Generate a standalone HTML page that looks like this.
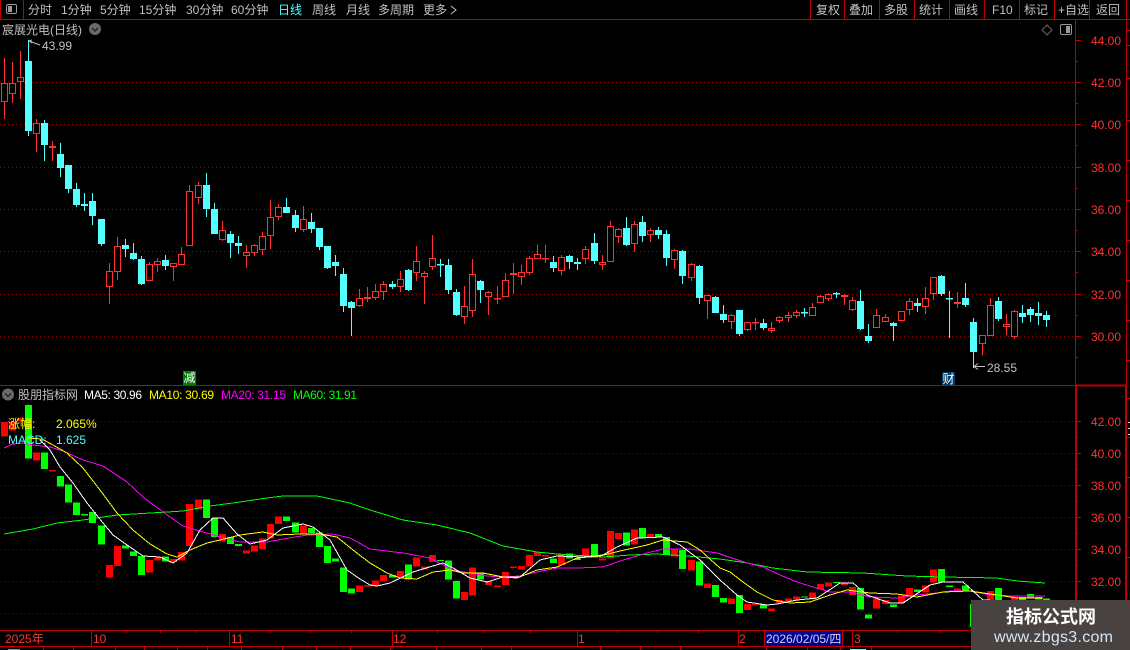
<!DOCTYPE html>
<html><head><meta charset="utf-8"><title>chart</title>
<style>
html,body{margin:0;padding:0;background:#000;width:1130px;height:650px;overflow:hidden}
svg{position:absolute;left:0;top:0;display:block}
text{font-family:"Liberation Sans","WenQuanYi Zen Hei","Noto Sans CJK SC",sans-serif;font-size:12px}
</style></head><body>
<svg width="1130" height="650" viewBox="0 0 1130 650" xmlns="http://www.w3.org/2000/svg">
<defs>
<path id="rb" d="M1.5 83.5h6v18h-6zM9.5 83.5h6v10h-6zM17.5 77.5h6v4h-6zM33.5 123.5h6v10h-6zM49.5 146.5h6v1h-6zM106.5 271.5h6v15h-6zM114.5 246.5h6v25h-6zM146.5 264.5h6v16h-6zM154.5 261.5h6v3h-6zM170.5 263.5h6v3h-6zM178.5 254.5h6v10h-6zM186.5 191.5h6v54h-6zM195.5 185.5h6v12h-6zM219.5 230.5h6v9h-6zM243.5 252.5h6v3h-6zM251.5 245.5h6v7h-6zM259.5 236.5h6v13h-6zM267.5 217.5h6v18h-6zM275.5 207.5h6v9h-6zM300.5 219.5h6v10h-6zM356.5 298.5h6v7h-6zM364.5 297.5h6v1h-6zM372.5 291.5h6v6h-6zM380.5 284.5h6v7h-6zM397.5 279.5h6v7h-6zM413.5 261.5h6v11h-6zM421.5 273.5h6v3h-6zM429.5 258.5h6v8h-6zM461.5 306.5h6v10h-6zM469.5 274.5h6v36h-6zM485.5 292.5h6v4h-6zM494.5 298.5h6v.5h-6zM502.5 280.5h6v16h-6zM510.5 273.5h6v1h-6zM518.5 272.5h6v4h-6zM526.5 258.5h6v14h-6zM534.5 254.5h6v4h-6zM542.5 258.5h6v.5h-6zM558.5 257.5h6v13h-6zM582.5 249.5h6v9h-6zM599.5 262.5h6v2h-6zM607.5 226.5h6v35h-6zM615.5 229.5h6v7h-6zM631.5 224.5h6v19h-6zM647.5 230.5h6v4h-6zM671.5 250.5h6v9h-6zM688.5 264.5h6v13h-6zM704.5 295.5h6v5h-6zM728.5 315.5h6v6h-6zM744.5 322.5h6v7h-6zM752.5 322.5h6v.5h-6zM768.5 328.5h6v2h-6zM776.5 317.5h6v3h-6zM785.5 315.5h6v2h-6zM793.5 312.5h6v3h-6zM809.5 307.5h6v8h-6zM817.5 296.5h6v6h-6zM825.5 294.5h6v4h-6zM841.5 295.5h6v1h-6zM849.5 300.5h6v9h-6zM873.5 315.5h6v12h-6zM882.5 317.5h6v4h-6zM898.5 311.5h6v9h-6zM906.5 301.5h6v8h-6zM922.5 298.5h6v8h-6zM930.5 277.5h6v16h-6zM954.5 302.5h6v1h-6zM979.5 335.5h6v8h-6zM987.5 305.5h6v30h-6zM1003.5 324.5h6v2h-6zM1011.5 311.5h6v25h-6z"/>
<path id="cb" d="M25 61h7v70h-7zM41 123h7v22h-7zM57 154h7v14h-7zM65 165h7v24h-7zM73 189h7v16h-7zM81 204h7v2h-7zM89 201h7v15h-7zM98 219h7v25h-7zM122 245h7v4h-7zM130 253h7v6h-7zM138 259h7v25h-7zM162 260h7v6h-7zM203 185h7v24h-7zM211 209h7v25h-7zM227 234h7v9h-7zM235 243h7v3h-7zM283 207h7v6h-7zM292 215h7v13h-7zM308 222h7v7h-7zM316 228h7v19h-7zM324 246h7v22h-7zM332 262h7v4h-7zM340 274h7v32h-7zM348 302h7v6h-7zM389 284h7v3h-7zM405 270h7v20h-7zM437 264h7v1.5h-7zM445 265h7v25h-7zM453 292h7v23h-7zM477 281h7v9h-7zM550 262h7v6h-7zM566 256h7v6h-7zM574 262h7v2h-7zM591 243h7v18h-7zM623 228h7v17h-7zM639 222h7v14h-7zM655 230h7v5h-7zM663 234h7v24h-7zM679 251h7v25h-7zM696 266h7v32h-7zM712 297h7v16h-7zM720 314h7v6h-7zM736 310h7v24h-7zM760 323h7v5h-7zM801 312h7v1.5h-7zM833 293h7v1.5h-7zM857 301h7v28h-7zM865 336h7v5h-7zM890 323h7v3h-7zM914 303h7v3h-7zM938 276h7v18h-7zM946 298h7v1.5h-7zM962 298h7v7h-7zM970 322h7v30h-7zM995 301h7v18h-7zM1019 313h7v4h-7zM1027 309h7v6h-7zM1035 313h7v3h-7zM1043 315h7v5h-7z"/>
</defs>

<!-- upper grid -->
<g stroke="#a00000" stroke-width="1" stroke-dasharray="1 3" shape-rendering="crispEdges">
<path d="M0 82.5H1075M0 124.5H1075M0 167.5H1075M0 209.5H1075M0 251.5H1075M0 294.5H1075M0 336.5H1075"/>
</g>
<!-- lower grid -->
<g stroke="#7c0000" stroke-width="1" stroke-dasharray="1 3" shape-rendering="crispEdges">
<path d="M0 421.5H1075M0 453.5H1075M0 485.5H1075M0 517.5H1075M0 549.5H1075M0 581.5H1075M0 613.5H1075"/>
</g>

<!-- upper candles -->
<g shape-rendering="crispEdges" fill="none" stroke-width="1">
<path stroke="#ff3232" d="M4.5 58V119M12.5 62V103M20.5 51V99M36.5 119V152M52.5 141V161M109.5 263V304M117.5 237V280M149.5 262V281M157.5 258V272M173.5 263V281M181.5 247V265M189.5 185V246M198.5 182V204M222.5 221V241M246.5 245V268M254.5 244V256M262.5 232V255M270.5 200V249M278.5 204V220M303.5 206V232M359.5 289V307M367.5 287V302M375.5 284V300M383.5 281V300M400.5 271V292M416.5 246V281M424.5 271V304M432.5 235V270M464.5 286V324M472.5 259V317M488.5 291V315M497.5 286V304M505.5 273V297M513.5 263V294M521.5 265V285M529.5 256V275M537.5 245V259M545.5 245V263M561.5 255V275M585.5 246V264M602.5 255V270M610.5 221V262M618.5 228V243M634.5 221V252M650.5 228V242M674.5 249V269M691.5 263V281M707.5 295V319M731.5 314V329M747.5 322V331M755.5 318V330M771.5 322V333M779.5 316V323M788.5 312V322M796.5 310V318M812.5 303V316M820.5 295V303M828.5 293V301M844.5 294V305M852.5 297V311M876.5 309V328M885.5 314V322M901.5 311V321M909.5 298V315M925.5 287V314M933.5 277V300M957.5 292V308M982.5 335V355M990.5 298V336M1006.5 314V335M1014.5 310V339"/>
<path stroke="#54ffff" d="M28.5 40V136M44.5 120V161M60.5 143V177M68.5 165V193M76.5 183V207M84.5 193V211M92.5 193V225M101.5 219V246M125.5 239V257M133.5 243V260M141.5 256V285M165.5 255V270M206.5 173V217M214.5 203V234M230.5 231V258M238.5 236V254M286.5 198V213M295.5 210V232M311.5 213V233M319.5 228V250M327.5 246V269M335.5 255V276M343.5 268V312M351.5 301V336M392.5 281V289M408.5 269V291M440.5 259V277M448.5 259V294M456.5 289V316M480.5 280V303M553.5 256V272M569.5 255V269M577.5 258V270M594.5 233V264M626.5 217V246M642.5 216V242M658.5 227V239M666.5 230V266M682.5 250V284M699.5 265V304M715.5 296V313M723.5 305V323M739.5 310V336M763.5 319V330M804.5 308V317M836.5 292V298M860.5 290V330M868.5 324V343M893.5 322V341M917.5 298V312M941.5 275V296M949.5 291V338M965.5 283V307M973.5 318V368M998.5 297V321M1022.5 305V323M1030.5 307V322M1038.5 302V325M1046.5 311V327"/>
<use href="#rb" fill="#000" stroke="#ff3232" stroke-width="1"/>
<use href="#cb" fill="#54ffff"/>
</g>

<!-- lower bars -->
<g shape-rendering="crispEdges" transform="translate(0 358.65) scale(1 .7619)">
<use href="#rb" fill="#ff0000" stroke="#ff0000" stroke-width="1"/>
<use href="#cb" fill="#00ff00"/>
</g>

<!-- MA lines -->
<g fill="none" stroke-width="1" shape-rendering="crispEdges">
<polyline stroke="#00ff00" points="4,534 33,529 57,523 83,520 117,515 167,512 183,511 210,506 240,502 267,498 283,496 317,496 350,503 370,510 403,520 437,525 470,533 503,546 537,552 557,554 603,557 630,555 657,554 687,556 720,559 747,563 773,568 807,572 863,573 907,576 943,577 997,578 1017,581 1045,583"/>
<polyline stroke="#ff00ff" points="4,448 13,444 23,443 33,445 50,447 63,451 83,460 103,466 127,482 143,497 163,512 183,526 200,531 217,536 240,542 267,542 283,539 307,535 333,534 350,538 363,545 370,549 403,553 430,558 453,570 470,573 487,576 503,577 520,576 537,572 557,568 577,568 603,567 620,561 647,553 663,549 690,549 717,553 747,563 763,567 780,575 797,582 813,587 830,592 850,592 870,597 897,598 917,595 937,593 950,591 970,591 990,595 1013,596 1045,596"/>
<polyline stroke="#ffff00" points="28,438 42,439 53,445 67,453 83,468 100,490 117,513 133,530 150,544 167,554 177,557 190,550 207,543 220,540 240,535 263,532 277,535 300,534 320,534 337,537 353,550 370,563 387,573 400,578 417,579 433,572 450,570 463,573 483,573 503,577 517,578 537,570 557,567 577,558 600,556 620,551 647,545 663,540 687,542 700,550 720,568 730,572 743,582 757,592 773,600 790,603 810,602 830,595 847,590 870,593 897,594 917,597 943,592 970,591 997,595 1017,598 1043,598"/>
<polyline stroke="#ffffff" points="40,440 50,450 60,467 73,483 87,503 103,523 113,535 127,545 143,556 160,557 173,563 187,553 200,530 213,518 223,518 237,534 250,544 267,540 283,528 303,524 313,527 330,540 347,570 360,579 370,585 377,586 390,583 413,572 443,563 453,568 470,578 487,582 503,577 520,577 540,560 557,556 583,557 603,555 617,547 637,538 663,537 680,545 700,560 720,580 737,595 747,602 767,605 777,604 797,600 817,598 840,583 853,583 867,595 890,603 903,603 930,585 943,582 963,582 983,600 1010,601 1045,602"/>
</g>

<!-- frame lines -->
<g stroke="#c00000" fill="none" stroke-width="1" shape-rendering="crispEdges">
<path d="M0 19.5H1130M0.5 0V19M23.5 0V19M810.5 0V19M844.5 0V19M879.5 0V19M914.5 0V19M949.5 0V19M984.5 0V19M1019.5 0V19M1054.5 0V19M1089.5 0V19M1126.5 0V385"/>
<path d="M1075.5 19V385M0 385.5H1075"/>
<path stroke-width="2" d="M1075 385.5H1126M1076 385V600M1126 385V600"/>
<path d="M0 630.5H1075M0 646.5H1075M91.5 630V646M229.5 630V646M392.5 630V646M577.5 630V646M738.5 630V646M764.5 630V646M842.5 630V646M852.5 630V646"/>
<path d="M126.5 631V633M160.5 631V633M195.5 631V633M270.5 631V633M310.5 631V633M351.5 631V633M437.5 631V633M484.5 631V633M530.5 631V633M617.5 631V633M657.5 631V633M698.5 631V633M897.5 631V633M940.5 631V633"/>
<path d="M43.5 647V650M73.5 647V650M115.5 647V650M144.5 647V650M177.5 647V650M207.5 647V650M241.5 647V650M282.5 647V650M316.5 647V650M350.5 647V650M390.5 647V650M436.5 647V650M481.5 647V650M511.5 647V650M600.5 647V650M640.5 647V650M680.5 647V650M766.5 647V650M807.5 647V650M840.5 647V650M871.5 647V650"/>
<!-- upper axis ticks -->
<path d="M1076 40.5H1081M1076 82.5H1081M1076 124.5H1081M1076 167.5H1081M1076 209.5H1081M1076 251.5H1081M1076 294.5H1081M1076 336.5H1081M1076 61.5H1078M1076 103.5H1078M1076 145.5H1078M1076 188.5H1078M1076 230.5H1078M1076 272.5H1078M1076 315.5H1078M1076 357.5H1078"/>
<!-- lower axis ticks -->
<path d="M1077 421.5H1081M1077 453.5H1081M1077 485.5H1081M1077 517.5H1081M1077 549.5H1081M1077 581.5H1081M1077 437.5H1078M1077 469.5H1078M1077 501.5H1078M1077 533.5H1078M1077 565.5H1078"/>
<!-- right edge ticks -->
<path d="M1127 30.5H1130M1127 45.5H1130M1127 78.5H1130M1127 120.5H1130M1127 160.5H1130M1127 200.5H1130M1127 240.5H1130M1127 280.5H1130M1127 320.5H1130M1127 360.5H1130M1127 398.5H1130M1127 437.5H1130M1127 477.5H1130M1127 517.5H1130M1127 557.5H1130"/>
</g>
<path stroke="#ddd" stroke-width="1" shape-rendering="crispEdges" d="M1128 422.5H1130M1128 428.5H1130M1128 434.5H1130"/>

<!-- date box -->
<rect x="765" y="631" width="77" height="15" fill="#000090"/>
<rect x="850" y="649" width="16" height="1" fill="#54ffff"/>
<rect x="8" y="649" width="12" height="1" fill="#888"/>

<!-- top toolbar -->
<g fill="#c0c0c0">
<text x="28" y="14">分时</text>
<text x="61" y="14">1分钟</text>
<text x="100" y="14">5分钟</text>
<text x="139" y="14">15分钟</text>
<text x="186" y="14">30分钟</text>
<text x="231" y="14">60分钟</text>
<text x="278" y="14" fill="#54ffff">日线</text>
<text x="312" y="14">周线</text>
<text x="346" y="14">月线</text>
<text x="378" y="14">多周期</text>
<text x="423" y="14">更多</text>
<path d="M451 6l5 4-5 4" fill="none" stroke="#c0c0c0"/>
<text x="816" y="14">复权</text>
<text x="849" y="14">叠加</text>
<text x="884" y="14">多股</text>
<text x="919" y="14">统计</text>
<text x="954" y="14">画线</text>
<text x="992" y="14">F10</text>
<text x="1024" y="14">标记</text>
<text x="1058" y="14">+自选</text>
<text x="1096" y="14">返回</text>
<text x="2" y="34" font-size="13">宸展光电(日线)</text>
<text x="18" y="399">股朋指标网</text>
<text x="42" y="50">43.99</text>
<text x="987" y="372">28.55</text>
</g>

<!-- left toolbar icon -->
<rect x="6.5" y="4.5" width="10" height="9" rx="1.5" fill="#000" stroke="#999"/>
<rect x="8" y="6" width="4" height="6" fill="#999"/>
<!-- right icons -->
<path d="M1047 25l5 5-5 5-5-5z" fill="none" stroke="#666"/>
<rect x="1060.5" y="24.5" width="11" height="10" rx="1.5" fill="#000" stroke="#999"/>
<rect x="1066" y="26" width="4" height="7" fill="#999"/>

<!-- circle chevrons -->
<circle cx="95" cy="29" r="6" fill="#6a6a6a"/>
<path d="M92 28l3 3 3-3" fill="none" stroke="#222" stroke-width="1.4"/>
<circle cx="8" cy="394.5" r="6" fill="#6a6a6a"/>
<path d="M5 393.5l3 3 3-3" fill="none" stroke="#222" stroke-width="1.4"/>

<!-- flags -->
<path d="M29 41l3-1M29 41l3 2M29 41L40 45" fill="none" stroke="#c0c0c0"/>
<path d="M974 366.5H985M974 366.5l4-3M974 366.5l4 3" fill="none" stroke="#c0c0c0"/>

<!-- signal chips -->
<rect x="183" y="371" width="13" height="14" fill="#008000"/>
<text x="183.5" y="382" fill="#fff">减</text>
<rect x="942" y="372" width="13" height="13" fill="#003d66"/>
<text x="942.5" y="383" fill="#fff">财</text>

<!-- lower legend -->
<text x="84" y="399" fill="#fff" textLength="58">MA5: 30.96</text>
<text x="149" y="399" fill="#ffff00" textLength="65">MA10: 30.69</text>
<text x="221" y="399" fill="#ff00ff" textLength="65">MA20: 31.15</text>
<text x="293" y="399" fill="#00ff00" textLength="64">MA60: 31.91</text>
<text x="8" y="428" fill="#ffff00">涨幅:</text>
<text x="56" y="428" fill="#ffff00">2.065%</text>
<text x="8" y="444" fill="#54ffff">MACD:</text>
<text x="56" y="444" fill="#54ffff">1.625</text>

<!-- axis labels -->
<g fill="#ff3232">
<text x="1091" y="45">44.00</text>
<text x="1091" y="87">42.00</text>
<text x="1091" y="129">40.00</text>
<text x="1091" y="172">38.00</text>
<text x="1091" y="214">36.00</text>
<text x="1091" y="256">34.00</text>
<text x="1091" y="299">32.00</text>
<text x="1091" y="341">30.00</text>
<text x="1091" y="426">42.00</text>
<text x="1091" y="458">40.00</text>
<text x="1091" y="490">38.00</text>
<text x="1091" y="522">36.00</text>
<text x="1091" y="554">34.00</text>
<text x="1091" y="586">32.00</text>
<text x="5" y="643">2025年</text>
<text x="93" y="643">10</text>
<text x="231" y="643">11</text>
<text x="393" y="643">12</text>
<text x="578" y="643">1</text>
<text x="739" y="643">2</text>
<text x="854" y="643">3</text>
</g>
<text x="766" y="643" fill="#d0d0f0">2026/02/05/四</text>

<!-- watermark -->
<rect x="971" y="600" width="159" height="50" fill="#484240"/>
<text x="1006" y="623" fill="#fff" font-weight="700" style="font-size:18px;font-family:'Noto Sans CJK SC',sans-serif">指标公式网</text>
<text x="994" y="642" fill="#d4e6f6" textLength="119" style="font-size:16px">www.zbgs3.com</text>
</svg>
</body></html>
